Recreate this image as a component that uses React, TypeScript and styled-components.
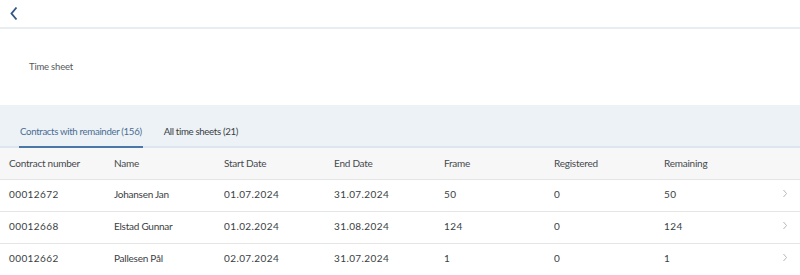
import { createGlobalStyle } from 'styled-components';
import styled from 'styled-components';

const GlobalStyle = createGlobalStyle`
  body {
    margin: 0;
    background: #fff;
    font-family: Lato, "Liberation Sans", sans-serif;
    color: #32363a;
  }
`;

const colors = {
  text: '#3a3e42',
  blue: '#4a6d92',
  border: '#e5e5e5',
  band: '#edf2f7',
  headBg: '#f7f7f7',
};

const Page = styled.div`
  width: 800px;
  height: 275px;
  overflow: hidden;
`;

const TopBar = styled.header`
  height: 27px;
  display: flex;
  align-items: center;
  padding-left: 9px;
  border-bottom: 2px solid #e8edf2;
`;

const BackButton = styled.button`
  border: none;
  background: none;
  padding: 0;
  display: flex;
  cursor: pointer;
`;

const TitleArea = styled.section`
  height: 74px;
  display: flex;
  align-items: center;
  padding-left: 29px;
  padding-bottom: 2px;
`;

const Title = styled.h1`
  margin: 0;
  font-size: 9.5px;
  font-weight: 400;
  letter-spacing: -0.2px;
  color: #55595d;
`;

const TabBar = styled.nav`
  background: ${colors.band};
  height: 41px;
  display: flex;
  align-items: flex-end;
  padding-left: 19px;
  gap: 20px;
  border-bottom: 2px solid #dde6ee;
`;

const Tab = styled.div<{ $active?: boolean }>`
  font-size: 9.7px;
  letter-spacing: -0.35px;
  padding: 0 1px 9px;
  color: ${(p) => (p.$active ? colors.blue : colors.text)};
  border-bottom: 2px solid ${(p) => (p.$active ? '#4a76a8' : 'transparent')};
  margin-bottom: -2px;
`;

const Row = styled.div<{ $head?: boolean }>`
  display: grid;
  grid-template-columns: 105px repeat(6, 110px) 1fr;
  align-items: center;
  box-sizing: border-box;
  height: 32px;
  padding-left: 9px;
  padding-bottom: ${(p) => (p.$head ? '2px' : '4px')};
  font-size: 10px;
  background: ${(p) => (p.$head ? colors.headBg : '#fff')};
  border-bottom: 1px solid ${colors.border};
  color: ${(p) => (p.$head ? '#45494d' : colors.text)};
`;

const Cell = styled.span<{ $numeric?: boolean }>`
  letter-spacing: ${(p) => (p.$numeric ? '0.4px' : '-0.25px')};
  white-space: nowrap;
`;

const Chevron = styled.span`
  justify-self: end;
  padding-right: 12px;
  display: flex;
`;

const headers = ['Contract number', 'Name', 'Start Date', 'End Date', 'Frame', 'Registered', 'Remaining'];

const rows = [
  ['00012672', 'Johansen Jan', '01.07.2024', '31.07.2024', '50', '0', '50'],
  ['00012668', 'Elstad Gunnar', '01.02.2024', '31.08.2024', '124', '0', '124'],
  ['00012662', 'Pallesen Pål', '02.07.2024', '31.07.2024', '1', '0', '1'],
];

export default function App() {
  return (
    <Page>
      <GlobalStyle />
      <TopBar>
        <BackButton aria-label="Back">
          <svg width="10" height="15" viewBox="0 0 10 15">
            <path d="M7.5 1.5 L2.5 7.5 L7.5 13.5" fill="none" stroke="#355784" strokeWidth="1.9" />
          </svg>
        </BackButton>
      </TopBar>
      <TitleArea>
        <Title>Time sheet</Title>
      </TitleArea>
      <TabBar>
        <Tab $active>Contracts with remainder (156)</Tab>
        <Tab>All time sheets (21)</Tab>
      </TabBar>
      <Row $head>
        {headers.map((h) => (
          <Cell key={h}>{h}</Cell>
        ))}
        <span />
      </Row>
      {rows.map((r) => (
        <Row key={r[0]}>
          {r.map((c, i) => (
            <Cell key={i} $numeric={i !== 1}>
              {c}
            </Cell>
          ))}
          <Chevron>
            <svg width="6" height="9" viewBox="0 0 6 9">
              <path d="M1.5 1 L4.5 4.5 L1.5 8" fill="none" stroke="#b4b8bc" strokeWidth="1" />
            </svg>
          </Chevron>
        </Row>
      ))}
    </Page>
  );
}
